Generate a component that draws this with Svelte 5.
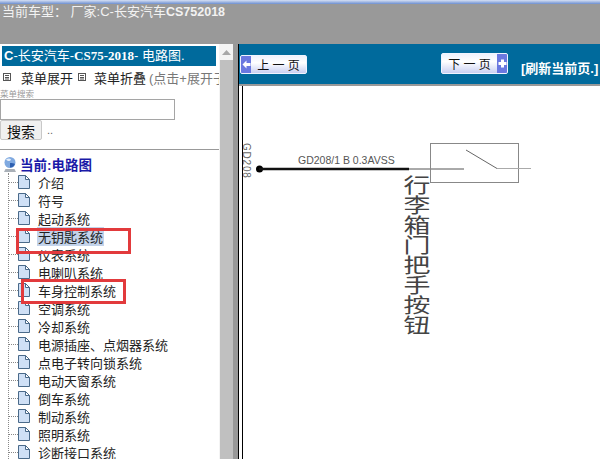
<script lang="ts">
  interface TreeItem {
    label: string;
    selected?: boolean;
  }

  const items: TreeItem[] = [
    { label: '介绍' },
    { label: '符号' },
    { label: '起动系统' },
    { label: '无钥匙系统', selected: true },
    { label: '仪表系统' },
    { label: '电喇叭系统' },
    { label: '车身控制系统' },
    { label: '空调系统' },
    { label: '冷却系统' },
    { label: '电源插座、点烟器系统' },
    { label: '点电子转向锁系统' },
    { label: '电动天窗系统' },
    { label: '倒车系统' },
    { label: '制动系统' },
    { label: '照明系统' },
    { label: '诊断接口系统' },
  ];
</script>

<div class="page">
  <div class="stripe"></div>
  <header class="topbar">当前车型： 厂家:C-长安汽车<b>CS752018</b></header>

  <div class="main">
    <aside class="left">
      <div class="left-content">
        <div class="title"><b>C</b>-长安汽车-<b class="serif">CS75-2018</b>- 电路图.</div>

        <div class="menu-row">
          <svg class="tick" width="8" height="8" viewBox="0 0 8 8">
            <rect x="0.5" y="0.5" width="7" height="7" fill="none" stroke="#555" />
            <path d="M2 2.5h4M2 4.5h4M2 6h4" stroke="#555" />
          </svg>
          <span class="menu-label first">菜单展开</span>
          <svg class="tick" width="8" height="8" viewBox="0 0 8 8">
            <rect x="0.5" y="0.5" width="7" height="7" fill="none" stroke="#555" />
            <path d="M2 2.5h4M2 4.5h4M2 6h4" stroke="#555" />
          </svg>
          <span class="menu-label">菜单折叠</span>
          <span class="hint">(点击+展开子</span>
        </div>

        <div class="search-label">菜单搜索</div>
        <div class="search-input"></div>
        <div class="search-row">
          <button class="search-btn">搜索</button>
          <span class="dots">..</span>
        </div>
        <div class="rule"></div>

        <div class="tree-head">
          <svg width="14" height="17" viewBox="0 0 14 17">
            <circle cx="7" cy="6.5" r="5.5" fill="#7fa9e0" />
            <path d="M3 3.5c2-1.5 4-1.5 5 0-1 2-3 2-5 0z" fill="#e4eefa" />
            <path d="M7 7c2 0 4 0 5 1-1 2.500-3 3.500-5 3.500z" fill="#2d5fb0" />
            <path d="M2.500 13h9l1.500 3h-12z" fill="#a9b0b8" />
          </svg>
          <span>当前:电路图</span>
        </div>

        <ul class="tree">
          {#each items as item}
            <li>
              <span class="dash"></span>
              <svg class="doc" width="12" height="14" viewBox="0 0 12 14">
                <path d="M0.500 0.500h7l4 4v9h-11z" fill="#cfe0f6" stroke="#4a6a8a" />
                <path d="M7.500 0.500v4h4z" fill="#fff" stroke="#4a6a8a" />
              </svg>
              <span class="label" class:selected={item.selected}>{item.label}</span>
            </li>
          {/each}
        </ul>

        <div class="mark mark-a"></div>
        <div class="mark mark-b"></div>
      </div>

      <div class="scrollbar">
        <svg class="arrow" width="9" height="5" viewBox="0 0 9 5"><path d="M4.500 0l4.500 5h-9z" fill="#a8a8a8" /></svg>
        <div class="thumb"></div>
      </div>
    </aside>

    <div class="divider"><i></i><i></i></div>

    <section class="right">
      <div class="toolbar">
        <button class="page-btn prev">
          <span class="cap"><svg width="9" height="9" viewBox="0 0 9 9"><path d="M0.500 4.500l4-4v2.500h4v3h-4v2.500z" fill="#fff" /></svg></span>
          <span class="page-text">上 一 页</span>
        </button>
        <button class="page-btn next">
          <span class="page-text">下 一 页</span>
          <span class="cap"><svg width="9" height="9" viewBox="0 0 9 9"><path d="M3 0.500h3v2.500h2.500v3h-2.500v2.500h-3v-2.500h-2.500v-3h2.500z" fill="#fff" /></svg></span>
        </button>
        <span class="refresh">[刷新当前页.]</span>
      </div>

      <div class="sheet">
        <svg class="diagram" width="359" height="373" viewBox="242 86 359 373">
          <text class="wire-id" transform="translate(242 143) rotate(90)">GD208</text>
          <text class="wire-label" x="297" y="164">GD208/1 B 0.3AVSS</text>
          <circle cx="258.500" cy="169" r="3.500" fill="#000" />
          <path d="M258 169H408" stroke="#111" stroke-width="2.600" />
          <path d="M408 169H463" stroke="#555" />
          <rect x="429.500" y="143.500" width="88" height="39" fill="none" stroke="#888" />
          <path d="M465 150L496 168.500" fill="none" stroke="#666" />
          <path d="M496 168.500H530" fill="none" stroke="#aaa" />
          <text class="vertical" transform="translate(413 175) scale(1.17 0.87)">行李箱门把手按钮</text>
        </svg>
      </div>
    </section>
  </div>
</div>

<style>
  :global(body) {
    margin: 0;
    overflow: hidden;
  }

  .page {
    width: 600px;
    height: 459px;
    display: flex;
    flex-direction: column;
    overflow: hidden;
    background: #999;
    font-family: "Liberation Sans", "Noto Sans CJK SC", sans-serif;
  }

  .stripe {
    height: 4px;
    background: linear-gradient(#d6e0f4, #6d8fd0);
  }

  .topbar {
    height: 40px;
    box-sizing: border-box;
    padding: 0 0 0 2px;
    color: #f2f2f2;
    font-size: 13px;
    line-height: 16px;
    white-space: pre;
  }

  .topbar b {
    font-weight: 700;
    font-size: 12.500px;
  }

  .main {
    flex: 1;
    display: flex;
    min-height: 0;
  }

  .left {
    width: 233px;
    display: flex;
    background: #fff;
    overflow: hidden;
  }

  .left-content {
    position: relative;
    width: 219px;
    overflow: hidden;
    flex: none;
  }

  .title {
    margin: 2px 3px 0 2px;
    height: 20px;
    line-height: 20px;
    padding-left: 2px;
    background: #006a9c;
    color: #fff;
    font-size: 13px;
    white-space: nowrap;
  }

  .serif {
    font-family: "Liberation Serif", serif;
    font-size: 13px;
  }

  .menu-row {
    display: flex;
    align-items: center;
    height: 22px;
    margin-bottom: 1px;
    padding-left: 3px;
    font-size: 13px;
    color: #222;
    white-space: nowrap;
  }

  .tick {
    flex: none;
  }

  .menu-label {
    margin-left: 8px;
    margin-right: 3px;
  }

  .menu-label.first {
    margin-left: 10px;
    margin-right: 5px;
  }

  .hint {
    color: #777;
  }

  .search-label {
    height: 10px;
    font-size: 8.500px;
    line-height: 10px;
    color: #999;
  }

  .search-input {
    width: 173px;
    height: 19px;
    border: 1px solid #a5a5a5;
    background: #fff;
  }

  .search-row {
    display: flex;
    align-items: center;
    height: 20px;
    gap: 5px;
  }

  .search-btn {
    width: 42px;
    height: 20px;
    padding: 0;
    background: #f0f0f0;
    border: 1px solid #c8c8c8;
    border-radius: 2px;
    font-family: inherit;
    font-size: 14px;
    color: #111;
  }

  .dots {
    font-size: 11px;
    color: #666;
  }

  .rule {
    height: 1px;
    margin-top: 9px;
    background: #999;
  }

  .tree-head {
    display: flex;
    align-items: center;
    gap: 3px;
    height: 18px;
    margin-top: 5px;
    padding-left: 3px;
    font-size: 13.500px;
    font-weight: 700;
    color: #1a1aa8;
  }

  .tree {
    list-style: none;
    margin: 0 0 0 8px;
    padding: 0;
    border-left: 1px dotted #888;
    white-space: nowrap;
  }

  .tree li {
    display: flex;
    align-items: center;
    height: 18px;
    font-size: 13px;
    color: #222;
  }

  .dash {
    width: 9px;
    border-top: 1px dotted #888;
    flex: none;
  }

  .doc {
    flex: none;
    margin-right: 7px;
  }

  .label {
    padding: 0 1px;
    margin-left: 0;
  }

  .label.selected {
    background: #c3d3ea;
  }

  .mark {
    position: absolute;
    box-sizing: border-box;
    border: 3px solid #e23a3c;
  }

  .mark-a {
    left: 16px;
    top: 184px;
    width: 115px;
    height: 26px;
  }

  .mark-b {
    left: 21px;
    top: 235px;
    width: 105px;
    height: 25px;
  }

  .scrollbar {
    flex: 1;
    display: flex;
    flex-direction: column;
    align-items: center;
    background: #f4f4f4;
  }

  .arrow {
    margin: 6px 0 5px;
  }

  .thumb {
    width: 13px;
    flex: 1;
    background: #c0c0c0;
    margin-left: 1px;
  }

  .divider {
    width: 9px;
    flex: none;
    display: flex;
    background: #999;
    padding-left: 5px;
    box-sizing: border-box;
    gap: 2px;
  }

  .divider i {
    width: 1px;
    background: #000;
  }

  .divider i:first-child {
    width: 2px;
  }

  .right {
    flex: 1;
    min-width: 0;
    display: flex;
    flex-direction: column;
    background: #fff;
    margin-left: -3px;
  }

  .toolbar {
    position: relative;
    height: 40px;
    flex: none;
    display: flex;
    align-items: flex-start;
    background: #006a9c;
    border-bottom: 2px solid #999;
    white-space: nowrap;
    overflow: hidden;
  }

  .page-btn {
    display: flex;
    align-items: center;
    padding: 0;
    border: 1px solid #f0f4ff;
    border-radius: 2px;
    background: linear-gradient(#eef1fc, #fff 40%, #c9d0f2);
    font-family: inherit;
    font-size: 12px;
    color: #111;
    overflow: hidden;
  }

  .prev {
    width: 67px;
    height: 19px;
    margin-top: 11px;
    margin-left: 1px;
  }

  .next {
    width: 67px;
    height: 21px;
    margin-top: 9px;
    margin-left: 134px;
  }

  .cap {
    width: 10px;
    height: 100%;
    flex: none;
    display: flex;
    align-items: center;
    justify-content: center;
    background: #6a78e0;
  }

  .page-text {
    flex: 1;
    text-align: center;
    white-space: pre;
  }

  .refresh {
    margin-left: 13px;
    margin-top: 16px;
    color: #fff;
    font-weight: 700;
    font-size: 13px;
    line-height: 17px;
  }

  .sheet {
    flex: 1;
    min-height: 0;
    border-left: 1px solid #000;
    margin-left: 3px;
    overflow: hidden;
  }

  .diagram {
    display: block;
  }

  .wire-id {
    font-size: 10px;
    letter-spacing: 0.8px;
    fill: #666;
  }

  .wire-label {
    font-size: 10.500px;
    fill: #555;
  }

  .vertical {
    writing-mode: vertical-rl;
    font-size: 23px;
    fill: #444;
  }
</style>
